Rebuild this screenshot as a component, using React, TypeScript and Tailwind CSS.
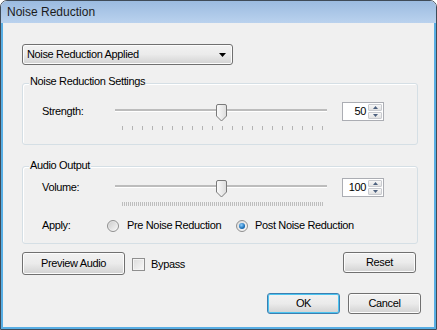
import React from "react";

const font = "font-['Liberation_Sans',Arial,sans-serif] text-[11px] leading-[13px] tracking-[-0.35px] text-[#000]";

const btn =
  "flex items-center justify-center rounded-[3px] border border-[#707070] bg-linear-to-b from-[#f2f2f2] via-[#ebebeb] to-[#d2d2d2] shadow-[inset_0_0_0_1px_#fcfcfc]";

const Thumb = () => (
  <svg width="11" height="18" viewBox="0 0 11 18" className="absolute left-[105px] top-[2px]">
    <defs>
      <linearGradient id="tg" x1="0" y1="0" x2="1" y2="0">
        <stop offset="0" stopColor="#fbfbfb" />
        <stop offset="1" stopColor="#dcdcdc" />
      </linearGradient>
    </defs>
    <path
      d="M2 0.5 H9 Q10.5 0.5 10.5 2 V12 L5.5 17 L0.5 12 V2 Q0.5 0.5 2 0.5 Z"
      fill="url(#tg)"
      stroke="#7a7a7a"
    />
  </svg>
);

const Slider = ({ dense }: { dense?: boolean }) => (
  <div className="flex w-[220px] flex-col">
    <div className="relative h-[19px]">
      <div className="absolute left-[4px] right-[4px] top-[7px] h-[3px] border-b border-white bg-[#bcbcbc]" />
      <Thumb />
    </div>
    <div
      className={
        dense
          ? "ml-[11px] mt-[5px] h-[4px] w-[201px] bg-[repeating-linear-gradient(90deg,#bdbdbd_0_1px,transparent_1px_2px)]"
          : "ml-[11px] mt-[5px] h-[4px] w-[201px] bg-[repeating-linear-gradient(90deg,#b4b4b4_0_1px,transparent_1px_10px)]"
      }
    />
  </div>
);

const Spinner = ({ value }: { value: string }) => (
  <div className="ml-[11px] flex h-[19px] w-[42px] border border-[#abadb3] bg-white">
    <div className="flex flex-1 items-center justify-end pr-[2px]">{value}</div>
    <div className="flex w-[15px] flex-col py-[1px] pr-[1px]">
      <div className="flex h-[8px] items-center justify-center rounded-[1px] border border-[#c9cbd0] bg-linear-to-b from-[#f7f7f7] to-[#e2e2e2]">
        <svg width="5" height="3" viewBox="0 0 5 3">
          <path d="M0 3 L2.5 0 L5 3 Z" fill="#4c607e" />
        </svg>
      </div>
      <div className="mt-[1px] flex h-[8px] items-center justify-center rounded-[1px] border border-[#c9cbd0] bg-linear-to-b from-[#f7f7f7] to-[#e2e2e2]">
        <svg width="5" height="3" viewBox="0 0 5 3">
          <path d="M0 0 L2.5 3 L5 0 Z" fill="#4c607e" />
        </svg>
      </div>
    </div>
  </div>
);

const Radio = ({ checked }: { checked?: boolean }) => (
  <div className="flex h-[12px] w-[12px] items-center justify-center rounded-full border border-[#8f8f8f] bg-linear-to-br from-[#dcdcdc] to-[#fafafa]">
    {checked ? (
      <div className="h-[6px] w-[6px] rounded-full bg-[radial-gradient(circle_at_40%_35%,#8fd0ff_0,#1a6fb8_60%,#0d4a86_100%)]" />
    ) : (
      <div className="h-[8px] w-[8px] rounded-full bg-linear-to-br from-[#cfcfcf] to-[#f4f4f4]" />
    )}
  </div>
);

export default function App() {
  return (
    <div className={`flex h-[330px] w-[437px] flex-col overflow-hidden rounded-t-[7px] border border-[#3f4b58] ${font}`}>
      <div className="flex h-[22px] items-center bg-linear-to-b from-[#9bbbe0] to-[#bad2ee] pl-[6px] font-['Liberation_Sans',Arial,sans-serif] text-[12px] tracking-normal text-[#1b1b1b]">
        Noise Reduction
      </div>
      <div className="flex flex-1 flex-col border-x-2 border-b-2 border-[#58aee4] bg-[#f0f0f0] pl-[19px] pr-[13px]">
        <div className={`${btn} mt-[21px] h-[21px] w-[211px] !justify-between pl-[4px] pr-[6px]`}>
          <span>Noise Reduction Applied</span>
          <svg width="7" height="4" viewBox="0 0 7 4">
            <path d="M0 0 H7 L3.5 4 Z" fill="#000" />
          </svg>
        </div>

        <div className="mt-[18px] flex h-[62px] w-[396px] flex-col rounded-[3px] border border-[#d5dfe5] shadow-[inset_1px_1px_0_#fff]">
          <span className="-mt-[9px] ml-[6px] w-fit bg-[#f0f0f0] px-[1px]">Noise Reduction Settings</span>
          <div className="mt-[14px] flex items-start">
            <span className="ml-[19px] flex h-[19px] w-[69px] items-center">Strength:</span>
            <Slider />
            <Spinner value="50" />
          </div>
        </div>

        <div className="mt-[21px] flex h-[78px] w-[396px] flex-col rounded-[3px] border border-[#d5dfe5] shadow-[inset_1px_1px_0_#fff]">
          <span className="-mt-[8px] ml-[6px] w-fit bg-[#f0f0f0] px-[1px]">Audio Output</span>
          <div className="mt-[6px] flex items-start">
            <span className="ml-[19px] flex h-[19px] w-[69px] items-center">Volume:</span>
            <Slider dense />
            <Spinner value="100" />
          </div>
          <div className="mt-[13px] flex h-[13px] items-center">
            <span className="ml-[19px] w-[65px]">Apply:</span>
            <Radio />
            <span className="ml-[8px] w-[109px]">Pre Noise Reduction</span>
            <Radio checked />
            <span className="ml-[7px]">Post Noise Reduction</span>
          </div>
        </div>

        <div className="mt-[8px] flex w-[396px] items-start">
          <div className={`${btn} h-[23px] w-[103px]`}>Preview Audio</div>
          <div className="ml-[7px] mt-[6px] h-[13px] w-[13px] border border-[#8f8f8f] bg-linear-to-br from-[#dcdcdc] to-[#f8f8f8] shadow-[inset_0_0_0_1px_#f4f4f4]" />
          <span className="ml-[6px] mt-[6px]">Bypass</span>
          <div className={`${btn} ml-auto mr-[2px] h-[21px] w-[73px]`}>Reset</div>
        </div>

        <div className="mt-[18px] flex justify-end gap-[8px]">
          <div className="flex h-[21px] w-[73px] items-center justify-center rounded-[3px] border border-[#3c7fb1] bg-linear-to-b from-[#f2f2f2] via-[#ebebeb] to-[#d2d2d2] shadow-[inset_0_0_0_1px_#4cc4f0]">
            OK
          </div>
          <div className={`${btn} h-[21px] w-[73px]`}>Cancel</div>
        </div>
      </div>
    </div>
  );
}
